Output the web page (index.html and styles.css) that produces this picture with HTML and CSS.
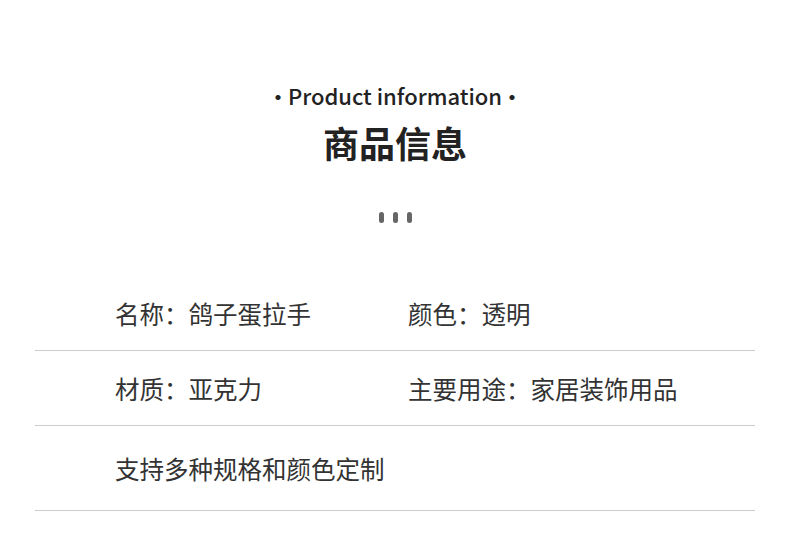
FILE: index.html
```html
<!DOCTYPE html>
<html lang="zh-CN">
<head>
    <meta charset="UTF-8">
    <meta name="viewport" content="width=device-width, initial-scale=1.0">
    <title>商品信息</title>
    <link rel="stylesheet" href="styles.css">
</head>
<body>
    <div class="header">
        <p class="sub"><span class="mark">·</span>Product information<span class="mark">·</span></p>
        <h2 class="title">商品信息</h2>
        <div class="dots">
            <span></span><span></span><span></span>
        </div>
    </div>

    <div class="info">
        <div class="row">
            <span class="cell">名称：鸽子蛋拉手</span>
            <span class="cell">颜色：透明</span>
        </div>
        <div class="row">
            <span class="cell">材质：亚克力</span>
            <span class="cell">主要用途：家居装饰用品</span>
        </div>
        <div class="row tall">
            <span class="cell">支持多种规格和颜色定制</span>
        </div>
    </div>
</body>
</html>
```

FILE: styles.css
```css
body {
    font-family: "Noto Sans CJK SC", "Noto Sans", sans-serif;
    background-color: #fff;
    color: #333;
    margin: 0;
    padding: 0;
}

.header {
    padding-top: 81px;
    text-align: center;
}

.sub {
    margin: 0;
    font-size: 22px;
    line-height: 28px;
    font-weight: 500;
    color: #222;
}

.mark {
    margin: 0 -1px;
}

.title {
    margin: 9px 0 0;
    font-size: 36px;
    line-height: 48px;
    font-weight: 700;
    color: #222;
}

.dots {
    margin-top: 46px;
    display: flex;
    justify-content: center;
    gap: 9px;
}

.dots span {
    width: 5px;
    height: 11px;
    border-radius: 3px;
    background-color: #666;
}

.info {
    margin: 53px 35px 0;
}

.row {
    display: grid;
    grid-template-columns: 293px 1fr;
    align-items: center;
    height: 74px;
    padding-left: 80px;
    border-bottom: 1px solid #ccc;
    font-size: 24.5px;
}

.row.tall {
    height: 84px;
}
```
